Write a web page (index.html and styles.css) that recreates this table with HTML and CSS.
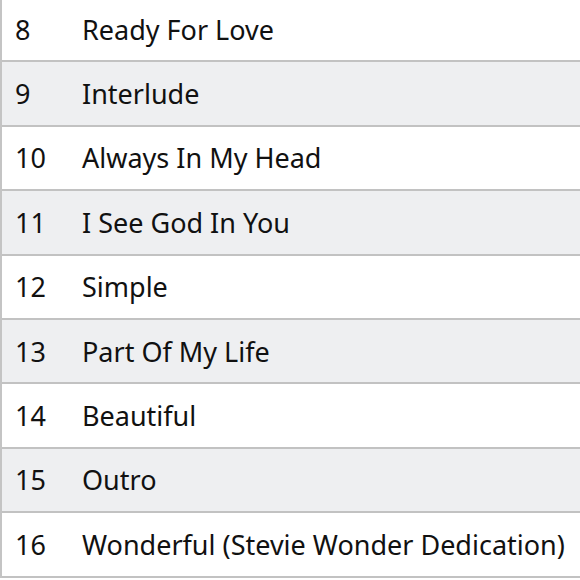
FILE: index.html
```html
<!DOCTYPE html>
<html lang="en">
<head>
    <meta charset="UTF-8">
    <meta name="viewport" content="width=device-width, initial-scale=1.0">
    <title>Tracklist</title>
    <link rel="stylesheet" href="styles.css">
</head>
<body>

    <div class="tracklist">
        <div class="track"><span class="num">8</span><span class="title">Ready For Love</span></div>
        <div class="track alt"><span class="num">9</span><span class="title">Interlude</span></div>
        <div class="track"><span class="num">10</span><span class="title">Always In My Head</span></div>
        <div class="track alt"><span class="num">11</span><span class="title">I See God In You</span></div>
        <div class="track"><span class="num">12</span><span class="title">Simple</span></div>
        <div class="track alt"><span class="num">13</span><span class="title">Part Of My Life</span></div>
        <div class="track"><span class="num">14</span><span class="title">Beautiful</span></div>
        <div class="track alt"><span class="num">15</span><span class="title">Outro</span></div>
        <div class="track"><span class="num">16</span><span class="title">Wonderful (Stevie Wonder Dedication)</span></div>
    </div>

</body>
</html>
```

FILE: styles.css
```css
body {
    margin: 0;
    padding: 0;
    background: #fff;
    font-family: "Noto Sans", "Open Sans", sans-serif;
    color: #111;
}
.tracklist {
    margin-top: -2px;
    border-left: 2px solid #c4c4c4;
    width: 600px;
}
.track {
    display: flex;
    align-items: center;
    height: 62.4px;
    border-bottom: 2px solid #c2c2c2;
    font-size: 27px;
}
.track.alt {
    background: #eeeff1;
}
.num {
    width: 67px;
    padding-left: 13px;
}
.title {
    white-space: nowrap;
}
```
